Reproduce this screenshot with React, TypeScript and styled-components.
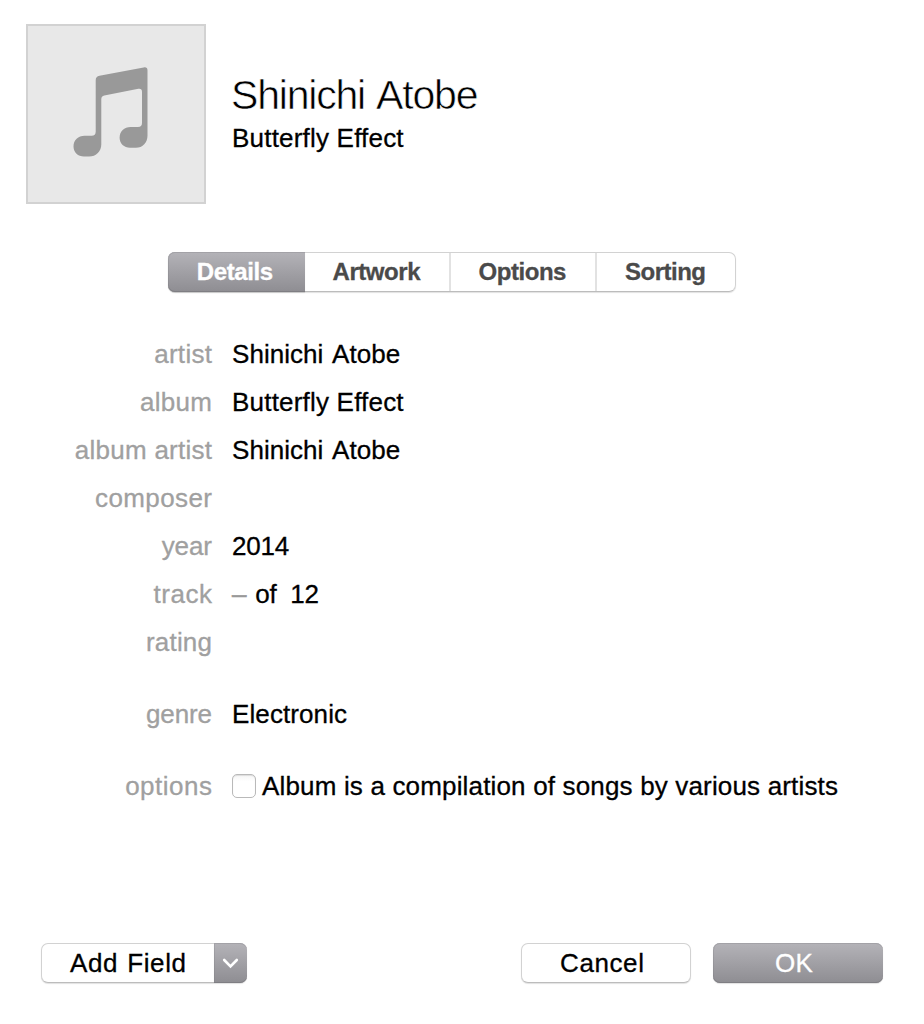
import React from "react";
import styled, { createGlobalStyle, css } from "styled-components";

const GlobalStyle = createGlobalStyle`
  *, *::before, *::after { box-sizing: border-box; }
  body {
    margin: 0;
    background: #fff;
    color: #000;
    font-family: "Liberation Sans", Helvetica, Arial, sans-serif;
    font-size: 26px;
  }
  button { font: inherit; padding: 0; margin: 0; }
`;

const raised = css`
  border: 1px solid #d2d2d2;
  border-bottom-color: #bcbcbc;
  box-shadow: 0 1px 1px rgba(0, 0, 0, 0.12);
`;

const shaded = css`
  background: linear-gradient(#b4b3b8, #8e8d92);
  color: #fff;
  box-shadow: inset 0 1px 0 #a3a2a7, inset 0 -1px 0 #7f7e83, inset 1px 0 0 rgba(120, 120, 125, 0.25), 0 1px 1px rgba(0, 0, 0, 0.12);
`;

const Dialog = styled.main`
  display: flex;
  flex-direction: column;
  width: 924px;
  height: 1024px;
  padding: 24px 41px 41px 26px;
`;

const Header = styled.header`
  display: flex;
  gap: 26px;
  height: 180px;
`;

const Cover = styled.div`
  display: flex;
  width: 180px;
  height: 180px;
  border: 2px solid #d2d2d2;
  background: #e8e8e8;
`;

const Heading = styled.div`
  padding-top: 48px;
`;

const Title = styled.h1`
  margin: 0 0 0 -1px;
  font-size: 41px;
  font-weight: 400;
  line-height: 46px;
  letter-spacing: -1.2px;
  word-spacing: 3.2px;
  white-space: nowrap;
  -webkit-text-stroke: 0.6px #fff;
`;

const Spaced = styled.span<{ $track?: number; $word?: number }>`
  letter-spacing: ${(p) => p.$track ?? 0}px;
  word-spacing: ${(p) => p.$word ?? 0}px;
  margin-right: ${(p) => -(p.$track ?? 0)}px;
  white-space: pre;
  -webkit-text-stroke: 0.3px currentColor;
`;

const Subtitle = styled.p`
  margin: 5px 0 0;
  line-height: 30px;
`;

const Tabs = styled.nav`
  ${raised}
  display: flex;
  width: 568px;
  height: 40px;
  margin: 48px 0 0 142px;
  border-radius: 7px;
`;

const Tab = styled.button<{ $width: number; $active?: boolean }>`
  width: ${(p) => p.$width}px;
  height: 38px;
  padding: 0 1px 0 0;
  border: 0;
  border-left: 2px solid #e2e2e2;
  background: transparent;
  color: #4a4a4a;
  font-size: 24px;
  font-weight: 700;
  line-height: 36px;

  ${(p) =>
    p.$active &&
    css`
      ${shaded}
      height: 40px;
      margin: -1px 0 -1px -1px;
      border: 0;
      border-radius: 7px 0 0 7px;
      line-height: 38px;
      padding-right: 3px;

      & + button { border-left: 0; }
    `}
`;

const Form = styled.section`
  margin-top: 38px;
`;

const Row = styled.div<{ $gap?: boolean }>`
  display: flex;
  align-items: center;
  gap: 20px;
  height: 48px;
  margin-top: ${(p) => (p.$gap ? 24 : 0)}px;
`;

const Label = styled.label`
  width: 186px;
  color: #a0a0a0;
  text-align: right;
`;

const Value = styled.div`
  display: flex;
  align-items: center;
`;

const Dash = styled.span`
  margin-right: 9px;
  color: #999;
  -webkit-text-stroke: 0.6px currentColor;
`;

const Checkbox = styled.input`
  appearance: none;
  width: 24px;
  height: 24px;
  margin: 0 6px 0 0;
  border: 1px solid #b9b9b9;
  border-radius: 5px;
  background: linear-gradient(#f5f5f5, #fff 30%);
  box-shadow: inset 0 1px 1px rgba(0, 0, 0, 0.1);
`;

const Footer = styled.footer`
  display: flex;
  margin-top: auto;
  padding-left: 15px;
`;

const Button = styled.button<{ $primary?: boolean }>`
  ${raised}
  width: 170px;
  height: 40px;
  padding-right: 8px;
  border-radius: 7px;
  background: #fff;
  line-height: 37px;

  ${(p) =>
    p.$primary &&
    css`
      ${shaded}
      margin-left: 22px;
      border: 0;
      line-height: 39px;
    `}
`;

const SplitButton = styled.div`
  display: flex;
  margin-right: auto;
`;

const SplitMain = styled(Button)`
  width: 173px;
  padding-right: 0;
  border-right: 0;
  border-radius: 7px 0 0 7px;
`;

const SplitMenu = styled.button`
  ${shaded}
  display: flex;
  align-items: center;
  justify-content: center;
  width: 33px;
  height: 40px;
  border: 0;
  border-radius: 0 7px 7px 0;
`;

const NoteIcon = () => (
  <svg width="176" height="176" viewBox="28 26 176 176" fill="#999">
    <path d="M99.5 75.8 L143.6 67.4 Q147.5 66.7 147.5 70.4 V135.5 C147.5 142.7 142.8 147.8 135.8 147.8 H130 C124.1 147.8 119.6 143.6 119.6 137.8 C119.6 131.3 124.2 127 130.6 127 H138 Q142 127 142 123 V92 Q142 88.2 138.4 88.8 L104.3 95.4 Q101.3 96 101.3 99 V144.2 C101.3 151.4 96.2 156.5 89.1 156.5 H84 C78 156.5 73.5 152.4 73.5 146.5 C73.5 140 78.2 135.8 84.6 135.8 H91.6 Q95.7 135.8 95.7 131.8 V80.2 Q95.7 76.5 99.5 75.8 Z" />
  </svg>
);

const tabs = [
  { name: "Details", width: 137, track: -0.38 },
  { name: "Artwork", width: 144, track: -0.45 },
  { name: "Options", width: 146, track: -0.45 },
  { name: "Sorting", width: 140, track: -0.5 },
];

type Field = {
  label: string;
  labelTrack: number;
  value?: React.ReactNode;
  track?: number;
  word?: number;
  gap?: boolean;
};

const fields: Field[] = [
  { label: "artist", labelTrack: 0.3, value: "Shinichi Atobe", track: 0.05, word: 2.7 },
  { label: "album", labelTrack: 0.3, value: "Butterfly Effect", track: 0.2 },
  { label: "album artist", labelTrack: 0.25, value: "Shinichi Atobe", track: 0.05, word: 2.7 },
  { label: "composer", labelTrack: 0.4 },
  { label: "year", labelTrack: -0.1, value: "2014", track: -0.2 },
  { label: "track", labelTrack: 0.55, value: <><Dash>–</Dash>of  12</>, track: -0.25 },
  { label: "rating", labelTrack: 0.2 },
  { label: "genre", labelTrack: -0.1, value: "Electronic", track: 0.1, gap: true },
];

export default function App() {
  return (
    <Dialog>
      <GlobalStyle />
      <Header>
        <Cover><NoteIcon /></Cover>
        <Heading>
          <Title>Shinichi Atobe</Title>
          <Subtitle><Spaced $track={0.2}>Butterfly Effect</Spaced></Subtitle>
        </Heading>
      </Header>
      <Tabs>
        {tabs.map((t, i) => (
          <Tab key={t.name} $width={t.width} $active={i === 0}>
            <Spaced $track={t.track}>{t.name}</Spaced>
          </Tab>
        ))}
      </Tabs>
      <Form>
        {fields.map((f) => (
          <Row key={f.label} $gap={f.gap}>
            <Label><Spaced $track={f.labelTrack}>{f.label}</Spaced></Label>
            <Value><Spaced $track={f.track} $word={f.word}>{f.value}</Spaced></Value>
          </Row>
        ))}
        <Row $gap>
          <Label><Spaced $track={0.5}>options</Spaced></Label>
          <Value>
            <Checkbox type="checkbox" id="compilation" />
            <label htmlFor="compilation"><Spaced $track={0.165}>Album is a compilation of songs by various artists</Spaced></label>
          </Value>
        </Row>
      </Form>
      <Footer>
        <SplitButton>
          <SplitMain><Spaced $track={0.55} $word={1.6}>Add Field</Spaced></SplitMain>
          <SplitMenu aria-label="Choose field">
            <svg width="18" height="12" viewBox="0 0 18 12" fill="none" stroke="#fff" strokeWidth="2.6" strokeLinecap="round">
              <path d="M2.2 3 L8.5 9.3 L14.8 3" />
            </svg>
          </SplitMenu>
        </SplitButton>
        <Button><Spaced $track={0.6}>Cancel</Spaced></Button>
        <Button $primary><Spaced $track={0.2}>OK</Spaced></Button>
      </Footer>
    </Dialog>
  );
}
